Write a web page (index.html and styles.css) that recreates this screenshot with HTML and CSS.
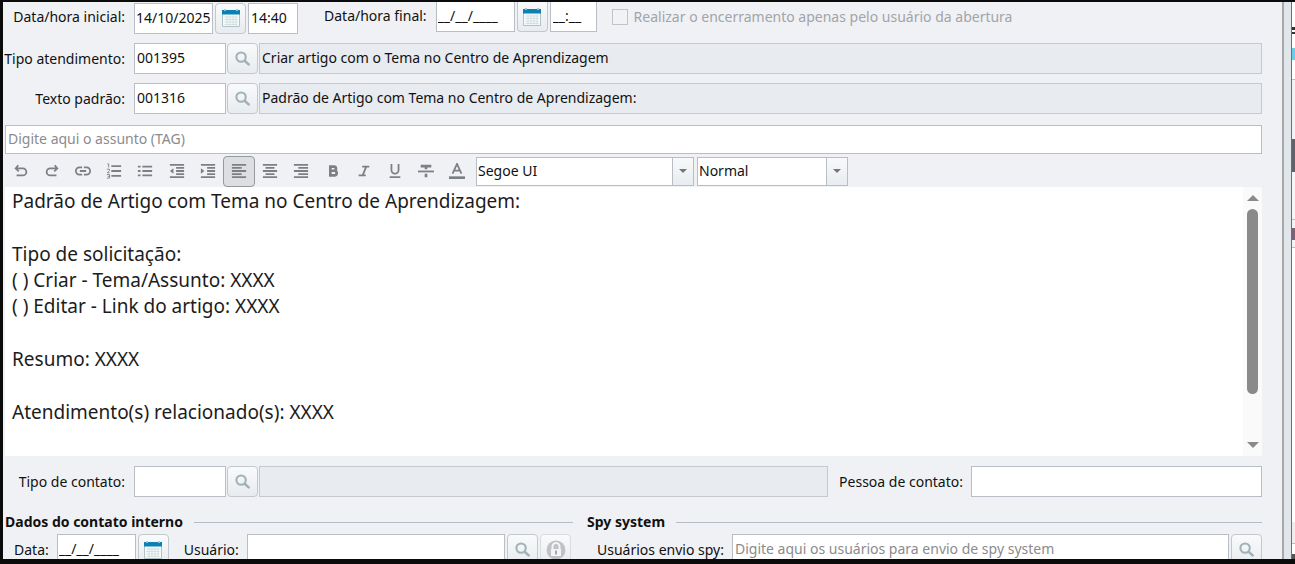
FILE: index.html
```html
<!DOCTYPE html>
<html lang="pt-BR">
<head>
<meta charset="utf-8">
<title>Atendimento</title>
<link rel="stylesheet" href="styles.css">
</head>
<body>
<svg class="sprite" aria-hidden="true">
  <symbol id="search" viewBox="0 0 16 16"><circle cx="6.5" cy="6.5" r="5" fill="none" stroke="#a0b1b8" stroke-width="2.2"/><path d="M10.5 10.5 L14.5 14.3" stroke="#a0b1b8" stroke-width="2.8" stroke-linecap="round"/></symbol>
  <symbol id="calendar" viewBox="0 0 18 18"><path d="M0.5 2h17v15.5h-17z" fill="#f4fafa" stroke="#b4c2c8"/><path d="M0 1h18v4.500H0z" fill="#0b80b4"/><path d="M3 0v2M15 0v2" stroke="#a5c4d2" stroke-width="2"/><path d="M2.5 8h13M2.5 10.5h13M2.5 13h13M2.5 15.5h13M5 6.500v10M8 6.500v10M11 6.500v10M14 6.500v10" stroke="#cfdadd" stroke-width=".8"/></symbol>
</svg>
<div class="window">
  <main class="form">
    <div class="row row-dates">
      <label class="label" for="d1">Data/hora inicial:</label>
      <input class="field date" id="d1" value="14/10/2025">
      <button class="btn" aria-label="Calendário"><svg class="cal"><use href="#calendar"/></svg></button>
      <input class="field time" aria-label="Hora inicial" value="14:40">
      <div class="final">
        <label for="d2">Data/hora final:</label>
        <input class="field date cut" id="d2" value="__/__/____">
        <button class="btn cut" aria-label="Calendário"><svg class="cal"><use href="#calendar"/></svg></button>
        <input class="field time cut" aria-label="Hora final" value="__:__">
        <label class="check"><input type="checkbox" disabled>Realizar o encerramento apenas pelo usuário da abertura</label>
      </div>
    </div>
    <div class="row">
      <label class="label" for="tipo">Tipo atendimento:</label>
      <input class="field code" id="tipo" value="001395">
      <button class="btn" aria-label="Pesquisar"><svg class="mag"><use href="#search"/></svg></button>
      <input class="field fill readonly" aria-label="Descrição do tipo" readonly value="Criar artigo com o Tema no Centro de Aprendizagem">
    </div>
    <div class="row">
      <label class="label" for="texto">Texto padrão:</label>
      <input class="field code" id="texto" value="001316">
      <button class="btn" aria-label="Pesquisar"><svg class="mag"><use href="#search"/></svg></button>
      <input class="field fill readonly" aria-label="Descrição do texto" readonly value="Padrão de Artigo com Tema no Centro de Aprendizagem:">
    </div>
    <input class="field tag" aria-label="Assunto" placeholder="Digite aqui o assunto (TAG)">
    <div class="toolbar">
      <div class="tools">
        <button class="tool" aria-label="Desfazer"><svg viewBox="0 0 18 18"><path d="M6 2.500L3 6l3.500 3.500M3.500 6H11a3.800 3.800 0 0 1 0 8H4"/></svg></button>
        <button class="tool" aria-label="Refazer"><svg viewBox="0 0 18 18"><path d="M12 2.500L15 6l-3.500 3.500M14.500 6H7a3.800 3.800 0 0 0 0 8h7"/></svg></button>
        <button class="tool" aria-label="Link"><svg viewBox="0 0 18 18"><path d="M8 5H5a4 4 0 0 0 0 8h3M10 5h3a4 4 0 0 1 0 8h-3M5.500 9h7"/></svg></button>
        <button class="tool" aria-label="Lista numerada"><svg viewBox="0 0 18 18"><path d="M6 3.500h11M6 9h11M6 14.500h11"/><path class="thin" d="M1.500 1H3v4M1 7h3v1.500L1.500 11H4M1 13h3v4H1M2 15h2"/></svg></button>
        <button class="tool" aria-label="Lista"><svg viewBox="0 0 18 18"><path d="M6 4h11M6 9h11M6 14h11M1 4h3M1 9h3M1 14h3"/></svg></button>
        <button class="tool" aria-label="Diminuir recuo"><svg viewBox="0 0 18 18"><path d="M1 2h16M8 5.500h9M8 9h9M8 12.500h9M1 16h16"/><path class="solid" d="M5 6v6L1 9z"/></svg></button>
        <button class="tool" aria-label="Aumentar recuo"><svg viewBox="0 0 18 18"><path d="M1 2h16M8 5.500h9M8 9h9M8 12.500h9M1 16h16"/><path class="solid" d="M1 6v6l4-3z"/></svg></button>
        <button class="tool active" aria-label="Alinhar à esquerda" aria-pressed="true"><svg viewBox="0 0 18 18"><path d="M1 2h16M1 5.500h11M1 9h16M1 12.500h11M1 16h16"/></svg></button>
        <button class="tool" aria-label="Centralizar"><svg viewBox="0 0 18 18"><path d="M1 2h16M4 5.500h10M1 9h16M4 12.500h10M1 16h16"/></svg></button>
        <button class="tool" aria-label="Alinhar à direita"><svg viewBox="0 0 18 18"><path d="M1 2h16M6 5.500h11M1 9h16M6 12.500h11M1 16h16"/></svg></button>
        <button class="tool" aria-label="Negrito"><svg viewBox="0 0 18 18"><path class="heavy" d="M6 4h4a2.300 2.300 0 0 1 0 4.700H6zM6 8.700h4.500a2.600 2.600 0 0 1 0 5.300H6z"/></svg></button>
        <button class="tool" aria-label="Itálico"><svg viewBox="0 0 18 18"><path d="M7 4h8M3 14h8M11.500 4l-4 10"/></svg></button>
        <button class="tool" aria-label="Sublinhado"><svg viewBox="0 0 18 18"><path d="M5 1v7a4 4 0 0 0 8 0V1M3 16h12"/></svg></button>
        <button class="tool" aria-label="Tachado"><svg viewBox="0 0 18 18"><path class="heavy" d="M3 3.500h12M9 3v4M9 12v4"/><path d="M0 9.500h18"/></svg></button>
        <button class="tool" aria-label="Cor do texto"><svg viewBox="0 0 18 18"><path d="M4 12L9 1l5 11M6 8.500h6"/><path class="heavy" d="M0 16.500h18"/></svg></button>
      </div>
      <div class="combo combo-font"><select aria-label="Fonte"><option>Segoe UI</option></select><span class="drop"><i class="down"></i></span></div>
      <div class="combo combo-style"><select aria-label="Estilo"><option>Normal</option></select><span class="drop"><i class="down"></i></span></div>
    </div>
    <div class="editor">
      <div class="text" role="textbox" aria-multiline="true" aria-label="Texto" contenteditable="true" spellcheck="false">
        <p>Padrão de Artigo com Tema no Centro de Aprendizagem:</p>
        <p>Tipo de solicitação:<br>( ) Criar - Tema/Assunto: XXXX<br>( ) Editar - Link do artigo: XXXX</p>
        <p>Resumo: XXXX</p>
        <p>Atendimento(s) relacionado(s): XXXX</p>
      </div>
      <div class="scroll"><i class="arrow-up"></i><div class="track"><div class="thumb"></div></div><i class="arrow-down"></i></div>
    </div>
    <div class="row row-contact">
      <label class="label" for="contato">Tipo de contato:</label>
      <input class="field code" id="contato">
      <button class="btn" aria-label="Pesquisar"><svg class="mag"><use href="#search"/></svg></button>
      <input class="field fill readonly" aria-label="Descrição do contato" readonly>
      <label class="person-label" for="pessoa">Pessoa de contato:</label>
      <input class="field person" id="pessoa">
    </div>
    <div class="sections">
      <section class="internal">
        <h2>Dados do contato interno</h2>
        <div class="line">
          <label for="d3">Data:</label>
          <input class="field date" id="d3" value="__/__/____">
          <button class="btn" aria-label="Calendário"><svg class="cal"><use href="#calendar"/></svg></button>
          <label class="user-label" for="user">Usuário:</label>
          <input class="field fill" id="user">
          <button class="btn" aria-label="Pesquisar"><svg class="mag"><use href="#search"/></svg></button>
          <button class="btn off" aria-label="Bloquear" disabled><svg class="lock" viewBox="0 0 20 20"><circle cx="10" cy="10" r="9.500" fill="#bfc1c4"/><path d="M6.500 9V6.500a3.500 3.500 0 0 1 7 0V9" fill="none" stroke="#f3f4f5" stroke-width="2"/><path d="M5 9h10v7H5z" fill="#f3f4f5"/><path d="M10 10.500v4" stroke="#a5a8ab" stroke-width="2"/></svg></button>
        </div>
      </section>
      <section class="spy">
        <h2>Spy system</h2>
        <div class="line">
          <label for="spy">Usuários envio spy:</label>
          <input class="field fill" id="spy" placeholder="Digite aqui os usuários para envio de spy system">
          <button class="btn" aria-label="Pesquisar"><svg class="mag"><use href="#search"/></svg></button>
        </div>
      </section>
    </div>
  </main>
  <div class="gutter"></div>
  <aside class="behind"></aside>
</div>
</body>
</html>
```
FILE: styles.css
```css
* { box-sizing: border-box; }

body {
  margin: 0;
  height: 100vh;
  padding: 2px 0 5px 3px;
  overflow: hidden;
  background: #0b0b0c;
  color: #111;
  font: 14px/18px "Noto Sans", "Open Sans", sans-serif;
}

input, button, select { margin: 0; font: inherit; color: inherit; }
.sprite { display: none; }

.window { display: flex; height: 100%; overflow: hidden; background: #f0f1f5; }
.form { flex: 1; min-width: 0; padding-right: 20px; }

.gutter { width: 9px; border-left: 2px solid #a7a8aa; background: #e1e6ea; }
.behind {
  width: 4px;
  border-left: 1px solid #66717f;
  background: linear-gradient(#fff 25px, #333 25px 28px, #fff 28px 30px, #333 30px 32px, #fff 32px 46px, #67cdea 46px 58px, #fff 58px 77px, #bbb 77px 78px, #f2f3f5 78px 137px, #60636b 137px 170px, #f5f6f8 170px 217px, #bbb 217px 218px, #f2f3f5 218px 226px, #7a6378 226px 238px, #f2f3f5 238px 245px, #bbb 245px 246px, #fff 246px 520px, #f2ecef 520px 541px, #bbb 541px 542px, #fff 542px 552px, #555 552px);
}

.row { display: flex; align-items: center; gap: 1px; margin-bottom: 9px; }
.label { width: 122px; margin-right: 8px; text-align: right; white-space: nowrap; }

.field {
  height: 31px;
  min-width: 0;
  padding: 0 2px 2px;
  border: 1px solid #b9bec6;
  border-radius: 0;
  background: #fff;
  outline: 0;
}
.field::placeholder { color: #8b8b8d; opacity: 1; }
.code { width: 92px; }
.date { width: 79px; padding-left: 1px; padding-right: 0; }
.time { width: 50px; }
.fill { flex: 1; }
.readonly { background: #e8ebf0; border-color: #c6cad0; }

.btn {
  display: flex;
  flex: none;
  align-items: center;
  justify-content: center;
  width: 31px;
  height: 31px;
  padding: 0;
  border: 1px solid #c3c8ce;
  border-radius: 4px;
  background: linear-gradient(#f9fafb, #e8ebef);
}
.btn.off { border-color: #d8dce0; }
.mag { width: 15px; height: 15px; }
.cal { width: 18px; height: 18px; }
.lock { width: 20px; height: 20px; }

.row-dates { height: 32px; gap: 2px; }
.row-dates .label { margin-right: 7px; margin-bottom: 2px; }
.final { display: flex; flex: 1; align-self: flex-start; align-items: center; gap: 2px; margin-left: 24px; white-space: nowrap; }
.final > label:first-child { margin-right: 7px; margin-bottom: 2px; }
.cut { height: 30px; border-top: 0; border-top-left-radius: 0; border-top-right-radius: 0; }
.final .time { width: 47px; }
.check { display: flex; align-items: center; gap: 6px; margin-left: 13px; color: #a2a4a8; }
.check input {
  width: 16px;
  height: 16px;
  border: 1px solid #c0c3c7;
  background: #f1f2f3;
  appearance: none;
}

.tag { display: block; width: calc(100% - 2px); height: 29px; margin: 11px 0 1px 2px; }

.toolbar { display: flex; align-items: center; gap: 3px; height: 32px; padding-left: 2px; }
.tools { display: flex; width: 468px; }
.tool {
  display: flex;
  flex: 1;
  align-items: center;
  justify-content: center;
  height: 31px;
  padding: 0;
  border: 1px solid transparent;
  border-radius: 4px;
  background: none;
}
.tool.active { border-color: #96999d; background: #dcdee1; }
.tool svg { width: 16px; height: 16px; fill: none; stroke: #7c8085; stroke-width: 2; }
.tool .thin { stroke-width: 1; }
.tool .heavy { stroke-width: 3; }
.tool .solid { fill: #7c8085; stroke: none; }

.combo { display: flex; height: 29px; border: 1px solid #b9bec6; background: #fff; }
.combo-font { width: 218px; }
.combo-style { width: 151px; }
.combo select { flex: 1; min-width: 0; padding: 0 1px 1px; border: 0; background: none; appearance: none; }
.drop {
  display: flex;
  align-items: center;
  justify-content: center;
  width: 21px;
  border-left: 1px solid #b9bec6;
  background: linear-gradient(#f8f9fa, #e9ecf0);
}
.down { border: 4px solid transparent; border-top-color: #73777e; border-bottom: 0; }

.editor { display: flex; height: 269px; margin: 0 0 10px 2px; background: #fff; }
.text { flex: 1; padding: 1px 7px; overflow: hidden; outline: 0; color: #1c1c1c; font-size: 19px; line-height: 26px; }
.text p { margin: 0 0 27px; }
.scroll { display: flex; flex-direction: column; align-items: center; width: 19px; padding: 8px 0; background: #fafafa; }
.arrow-up { border: 6px solid transparent; border-top: 0; border-bottom-color: #8a8a8a; }
.arrow-down { border: 6px solid transparent; border-bottom: 0; border-top-color: #8a8a8a; }
.track { flex: 1; width: 11px; padding: 8px 0; }
.thumb { height: 82%; border-radius: 6px; background: #8a8a8a; }

.row-contact { margin-bottom: 16px; }
.person-label { margin: 0 7px 0 10px; }
.person { width: 291px; }

.sections { display: grid; grid-template-columns: 570fr 675fr; gap: 14px; }
h2 { display: flex; align-items: center; gap: 11px; margin: 0 0 3px 2px; font-size: 14px; line-height: 18px; white-space: nowrap; }
h2::after { content: ""; flex: 1; height: 1px; background: #b5bcc7; }
.line { display: flex; align-items: center; gap: 2px; }
.internal .line { padding-left: 11px; padding-right: 2px; }
.internal label, .spy label { margin-right: 6px; }
.internal .user-label { margin-left: 13px; }
.spy h2 { margin-left: 0; }
.spy .line { padding-left: 10px; }
```
